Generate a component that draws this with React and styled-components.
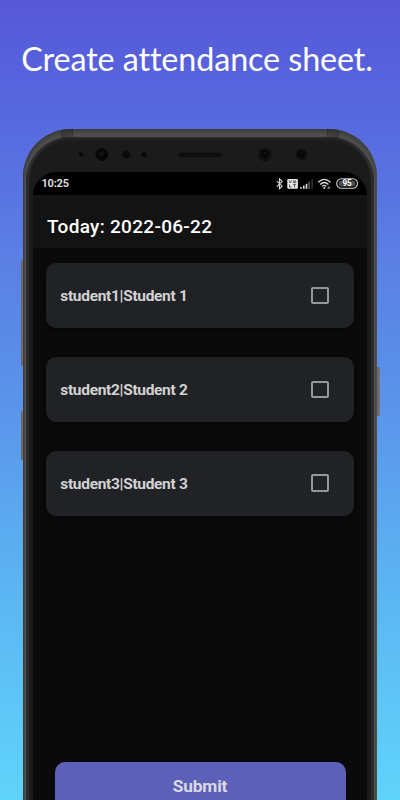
import React from 'react'
import styled, { createGlobalStyle } from 'styled-components';

const students = [
  { id: 'student1', name: 'Student 1' },
  { id: 'student2', name: 'Student 2' },
  { id: 'student3', name: 'Student 3' },
];

function StatusIcons() {
  return (
    <svg width="84" height="14" viewBox="0 0 84 14" fill="none">
      {/* bluetooth */}
      <path d="M1.8 4.2 L7.2 9.2 L4.5 11.8 V1.8 L7.2 4.4 L1.8 9.6" stroke="#d8d8d8" strokeWidth="1.1" />
      {/* volte */}
      <rect x="12.3" y="2" width="10.6" height="9.8" rx="1" fill="#e6e6e6" />
      <path d="M14 3.5 L15.2 5.9 L16.4 3.5 M18.3 3.9 H20.7 V5.7 H18.3 Z M14.5 7.4 V10 H16.6 M18 7.7 H21 M19.5 7.7 V10.4" stroke="#333" strokeWidth="0.75" />
      {/* signal */}
      <rect x="25.3" y="9.9" width="1.5" height="1.9" fill="#ddd" />
      <rect x="28" y="8.5" width="1.6" height="3.3" fill="#ddd" />
      <rect x="30.7" y="6.8" width="1.6" height="5" fill="#ddd" />
      <rect x="33.4" y="4.6" width="1.4" height="7.2" fill="#666" />
      <rect x="36.5" y="2.2" width="1.2" height="9.6" fill="#444" />
      {/* wifi */}
      <path d="M43.2 5.2 Q49.3 -0.4 55.4 5.2 M45.2 7.4 Q49.3 3.7 53.4 7.4 M47.2 9.3 Q49.3 7.5 51.4 9.3" stroke="#ddd" strokeWidth="1.3" />
      <circle cx="49.3" cy="10.9" r="1" fill="#ddd" />
      <path d="M52.6 10.7 H55.2 M53.9 9.4 V12" stroke="#999" strokeWidth="1" />
      {/* battery */}
      <rect x="61.7" y="1.8" width="20.8" height="9.4" rx="4.7" stroke="#d0d0d0" strokeWidth="1.1" />
      <rect x="63.6" y="3.6" width="17" height="5.8" rx="2.9" fill="#4c4c4c" />
      <text x="72.1" y="9.4" textAnchor="middle" fill="#fff" fontFamily="Roboto, sans-serif" fontWeight="700" fontSize="8.2">95</text>
    </svg>
  )
}

function Sensors() {
  return (
    <svg width="260" height="24" viewBox="70 142 260 24">
      <defs>
        <radialGradient id="lens" cx="0.5" cy="0.4" r="0.6">
          <stop offset="0" stopColor="#1c1c1c" />
          <stop offset="0.35" stopColor="#080808" />
          <stop offset="1" stopColor="#050505" />
        </radialGradient>
      </defs>
      <circle cx="81" cy="154.6" r="3" fill="#161616" />
      <circle cx="81" cy="154.4" r="1.8" fill="url(#lens)" />
      <circle cx="101.7" cy="154.9" r="6.8" fill="#242424" />
      <circle cx="101.7" cy="154.5" r="6.5" fill="url(#lens)" />
      <circle cx="126.3" cy="154.7" r="4.6" fill="#101010" stroke="#222" strokeWidth="0.4" />
      <circle cx="126.3" cy="154.4" r="2.6" fill="url(#lens)" />
      <circle cx="144.2" cy="154.7" r="3.3" fill="#121212" stroke="#222" strokeWidth="0.4" />
      <circle cx="144.2" cy="154.4" r="2" fill="url(#lens)" />
      <rect x="178" y="152.2" width="44.3" height="5.2" rx="2.6" fill="#0d0d0d" stroke="#252525" strokeWidth="0.5" />
      <circle cx="264.8" cy="154.6" r="7.4" fill="#101010" stroke="#262626" strokeWidth="0.5" />
      <circle cx="264.8" cy="154" r="4" fill="url(#lens)" />
      <circle cx="301.6" cy="154.6" r="6.4" fill="#101010" stroke="#262626" strokeWidth="0.5" />
      <circle cx="301.6" cy="154" r="3.6" fill="url(#lens)" />
    </svg>
  )
}

export default function App() {
  return (
    <Wrapper>
      <GlobalStyle />
      <Title>Create attendance sheet.</Title>
      <Phone>
        <SideKey $side="left" $top={131} $height={106} />
        <SideKey $side="left" $top={282} $height={49} />
        <SideKey $side="right" $top={238} $height={49} />
        <Body>
          <Antenna $left={38} />
          <Antenna $left={304} />
          <Bezel>
            <SensorRow>
              <Sensors />
            </SensorRow>
            <Screen>
              <StatusBar>
                <Clock>10:25</Clock>
                <StatusIcons />
              </StatusBar>
              <Header>Today: 2022-06-22</Header>
              <List>
                {students.map((student) => (
                  <Card key={student.id}>
                    <CardLabel>{student.id}|{student.name}</CardLabel>
                    <Checkbox type="checkbox" aria-label={student.name} />
                  </Card>
                ))}
              </List>
              <Submit type="button">Submit</Submit>
            </Screen>
          </Bezel>
        </Body>
      </Phone>
    </Wrapper>
  )
}

const GlobalStyle = createGlobalStyle`
  * {
    box-sizing: border-box;
  }

  body {
    margin: 0;
    font-family: Roboto, sans-serif;
  }
`;

const Wrapper = styled.main`
  width: 400px;
  height: 800px;
  overflow: hidden;
  display: flex;
  flex-direction: column;
  align-items: center;
  background: linear-gradient(180deg, #5658d8 0%, #5769df 15%, #5a7fe5 32%, #5a93ea 50%, #5bacf0 67%, #5ecbf9 92%, #5fd3fb 100%);
`;

const Title = styled.h1`
  flex: none;
  height: 129px;
  margin: 0;
  padding-top: 38px;
  padding-right: 6px;
  font-family: Lato, sans-serif;
  font-size: 32.3px;
  font-weight: 400;
  font-variant-ligatures: none;
  line-height: 42px;
  letter-spacing: -0.1px;
  white-space: nowrap;
  color: #fff;
`;

const Phone = styled.section`
  position: relative;
  flex: none;
  width: 354px;
  height: 671px;
`;

const SideKey = styled.div`
  position: absolute;
  ${({ $side }) => $side}: -2.5px;
  top: ${({ $top }) => $top}px;
  width: 3px;
  height: ${({ $height }) => $height}px;
  border-radius: 1px;
  background: linear-gradient(90deg, #66625f, #7b7875);
`;

const Body = styled.div`
  position: relative;
  height: 100%;
  padding: 8px 3px 0;
  overflow: hidden;
  border-radius: 48px 48px 0 0;
  background: #505050;
  box-shadow: inset 0 3px 4px #3a3a3a, inset 1px 0 0 #404040, inset -1px 0 0 #625c54;
`;

const Antenna = styled.span`
  position: absolute;
  left: ${({ $left }) => $left}px;
  top: 0;
  width: 12px;
  height: 9px;
  background: rgba(0, 0, 0, 0.18);
  border-left: 1px solid rgba(0, 0, 0, 0.12);
  border-right: 1px solid rgba(0, 0, 0, 0.12);
`;

const Bezel = styled.div`
  position: relative;
  height: 100%;
  display: flex;
  flex-direction: column;
  padding: 0 7px;
  border-radius: 45px 45px 0 0;
  background: #1b1b1b;
  box-shadow: inset 0 2px 3px #2b2b2b, inset 3px 0 2px #303030, inset -3px 0 2px #303030;
`;

const SensorRow = styled.div`
  flex: none;
  height: 35px;
  padding-top: 5px;
  display: flex;
  justify-content: center;
`;

const Screen = styled.div`
  flex: 1;
  display: flex;
  flex-direction: column;
  overflow: hidden;
  border-radius: 24px 24px 0 0;
  background: #0a0a0a;
`;

const StatusBar = styled.div`
  flex: none;
  height: 23px;
  padding: 0 8px 0 8.5px;
  display: flex;
  align-items: center;
  justify-content: space-between;
  background: #000;
`;

const Clock = styled.span`
  font-size: 11px;
  font-weight: 700;
  letter-spacing: -0.2px;
  color: #dcdcdc;
`;

const Header = styled.h2`
  flex: none;
  height: 53px;
  margin: 0;
  padding: 0 14px;
  font-size: 19px;
  font-weight: 500;
  line-height: 63px;
  letter-spacing: 0.3px;
  color: #fff;
  background: #131313;
`;

const List = styled.div`
  display: flex;
  flex-direction: column;
  gap: 28.8px;
  padding: 15px 13.3px 0;
`;

const Card = styled.label`
  height: 65px;
  padding: 0 25px 0 14px;
  display: flex;
  align-items: center;
  justify-content: space-between;
  border-radius: 10px;
  background: #212226;
  box-shadow: 0 1px 4px rgba(0, 0, 0, 0.5);
`;

const CardLabel = styled.span`
  padding-top: 1px;
  font-size: 15.5px;
  font-weight: 700;
  letter-spacing: -0.32px;
  color: #d2d2d2;
`;

const Checkbox = styled.input`
  appearance: none;
  width: 17.5px;
  height: 17.5px;
  margin: 0;
  border: 2px solid #96979a;
  border-radius: 2px;
`;

const Submit = styled.button`
  flex: none;
  width: 291px;
  height: 48px;
  margin: 246px auto 0;
  border: none;
  border-radius: 10px;
  background: #5d60b8;
  font-family: inherit;
  font-size: 17.3px;
  font-weight: 700;
  letter-spacing: -0.15px;
  color: #d9d9e0;
`;
